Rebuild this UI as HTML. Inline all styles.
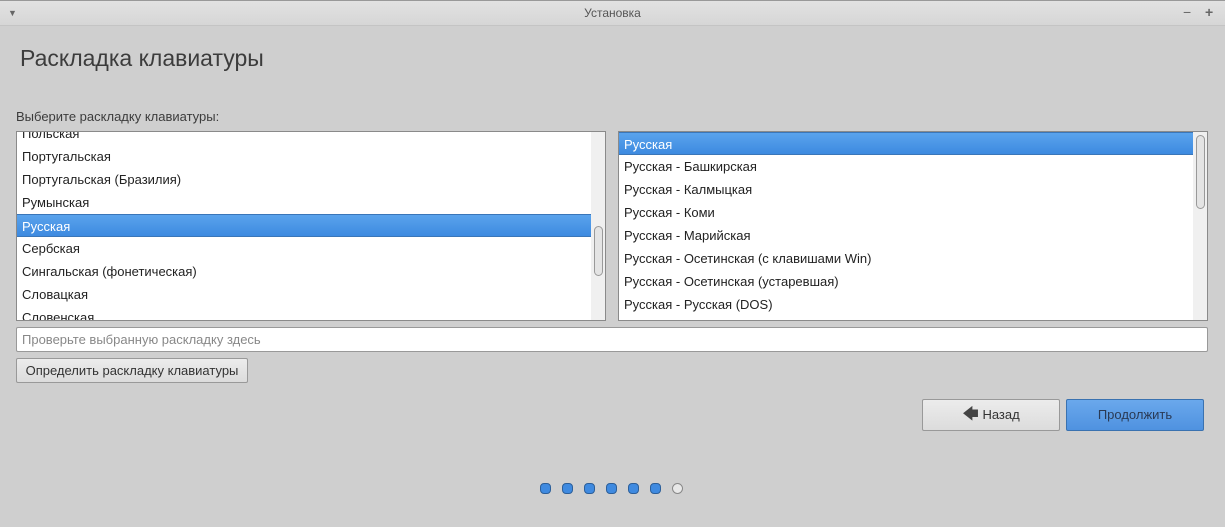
<!DOCTYPE html>
<html><head><meta charset="utf-8"><style>
*{margin:0;padding:0;box-sizing:border-box}
body{width:1225px;height:527px;background:#cfcfcf;font-family:"Liberation Sans","DejaVu Sans",sans-serif;color:#3a3a3a;position:relative;overflow:hidden;font-size:13px}
.tb{position:absolute;left:0;top:0;width:1225px;height:26px;background:linear-gradient(#e2e2e2,#d6d6d6);border-top:1px solid #999;border-bottom:1px solid #c4c4c4;text-align:center;line-height:25px;font-size:12px;color:#555}
.abs{position:absolute}
.list{position:absolute;background:#fff;border:1px solid #8a8a8a;overflow:hidden}
.row{position:absolute;left:0;height:23px;line-height:23px;padding-left:5px;color:#222;white-space:nowrap}
.sel{background:linear-gradient(#5aa3ec,#3d8ae0);color:#fff;border-top:1px solid #3a76b8;border-bottom:1px solid #3a76b8}
.sb{position:absolute;top:0;width:15px;height:100%;background:#f0f0f0}
.thumb{position:absolute;left:3px;width:9px;border:1px solid #999;border-radius:5px;background:#e4e4e4}
.btn{position:absolute;border:1px solid #999;border-radius:2px;background:linear-gradient(#ececec,#dcdcdc);text-align:center;color:#333}
.dot{position:absolute;top:483px;width:11px;height:11px;border-radius:4px;background:#3f8ae0;border:1px solid #2c5f9a}
</style></head><body>
<div class="tb">Установка<span class="abs" style="left:8px;top:0;font-size:9px;color:#666">▼</span><span class="abs" style="left:1183px;top:-1px;color:#666;font-size:14px">−</span><span class="abs" style="left:1205px;top:-1px;color:#666;font-size:14px;font-weight:bold">+</span></div>
<div class="abs" style="left:20px;top:45px;font-size:23px;color:#3c3c3c">Раскладка клавиатуры</div>
<div class="abs" style="left:16px;top:109px;font-size:13px;color:#3c3c3c">Выберите раскладку клавиатуры:</div>
<div class="list" style="left:16px;top:131px;width:590px;height:190px">
<div class="row" style="top:-10px;width:574px">Польская</div>
<div class="row" style="top:13px;width:574px">Португальская</div>
<div class="row" style="top:36px;width:574px">Португальская (Бразилия)</div>
<div class="row" style="top:59px;width:574px">Румынская</div>
<div class="row sel" style="top:82px;width:574px">Русская</div>
<div class="row" style="top:105px;width:574px">Сербская</div>
<div class="row" style="top:128px;width:574px">Сингальская (фонетическая)</div>
<div class="row" style="top:151px;width:574px">Словацкая</div>
<div class="row" style="top:174px;width:574px">Словенская</div>
<div class="sb" style="left:574px"><div class="thumb" style="top:94px;height:50px"></div></div>
</div>
<div class="list" style="left:618px;top:131px;width:590px;height:190px">
<div class="row sel" style="top:0;width:574px">Русская</div>
<div class="row" style="top:23px;width:574px">Русская - Башкирская</div>
<div class="row" style="top:46px;width:574px">Русская - Калмыцкая</div>
<div class="row" style="top:69px;width:574px">Русская - Коми</div>
<div class="row" style="top:92px;width:574px">Русская - Марийская</div>
<div class="row" style="top:115px;width:574px">Русская - Осетинская (с клавишами Win)</div>
<div class="row" style="top:138px;width:574px">Русская - Осетинская (устаревшая)</div>
<div class="row" style="top:161px;width:574px">Русская - Русская (DOS)</div>
<div class="sb" style="left:574px"><div class="thumb" style="top:3px;height:74px"></div></div>
</div>
<div class="abs" style="left:16px;top:327px;width:1192px;height:25px;background:#fff;border:1px solid #999;border-radius:2px;line-height:23px;padding-left:5px;color:#888">Проверьте выбранную раскладку здесь</div>
<div class="btn" style="left:16px;top:358px;width:232px;height:25px;line-height:23px">Определить раскладку клавиатуры</div>
<div class="btn" style="left:922px;top:399px;width:138px;height:32px;line-height:30px"><span style="font-size:16px;color:#444">🡄</span> Назад</div>
<div class="btn" style="left:1066px;top:399px;width:138px;height:32px;line-height:30px;background:linear-gradient(#6aa8ec,#4f92e0);border-color:#3a72b0;color:#2a3a55">Продолжить</div>
<div class="dot" style="left:540px"></div><div class="dot" style="left:562px"></div><div class="dot" style="left:584px"></div><div class="dot" style="left:606px"></div><div class="dot" style="left:628px"></div><div class="dot" style="left:650px"></div>
<div class="dot" style="left:672px;background:#e8e8e8;border-color:#888;border-radius:6px"></div>
</body></html>
